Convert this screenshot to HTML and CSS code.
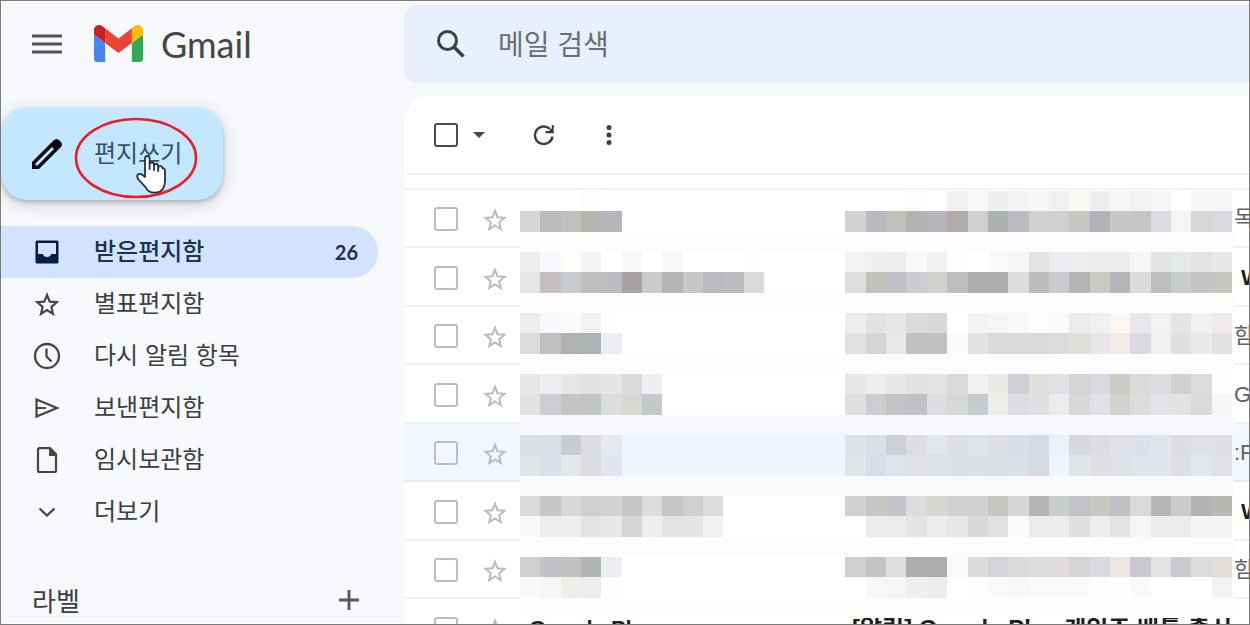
FILE: index.html
```html
<!DOCTYPE html>
<html lang="ko">
<head>
<meta charset="utf-8">
<title>Gmail</title>
<link rel="stylesheet" href="styles.css">
</head>
<body>
<div class="window">
  <aside class="sidebar">
    <header class="brand">
      <button class="icon-btn" aria-label="메뉴">
        <svg width="30" height="20" viewBox="0 0 30 20"><path d="M0 2h30M0 10h30M0 18h30" stroke="#50545a" stroke-width="2.800" fill="none"/></svg>
      </button>
      <svg class="logo" width="49" height="37" viewBox="52 42 88 66" preserveAspectRatio="none">
        <path fill="#4285f4" d="M58 108h14V74L52 59v43c0 3.320 2.690 6 6 6"/>
        <path fill="#34a853" d="M120 108h14c3.320 0 6-2.690 6-6V59l-20 15"/>
        <path fill="#fbbc04" d="M120 48v26l20-15v-8c0-7.420-8.470-11.650-14.400-7.200"/>
        <path fill="#ea4335" d="M72 74V48l24 18 24-18v26L96 92"/>
        <path fill="#c5221f" d="M52 51v8l20 15V48l-5.600-4.200c-5.940-4.450-14.400-.22-14.400 7.200"/>
      </svg>
      <span class="wordmark">Gmail</span>
    </header>

    <div class="compose-wrap">
      <button class="compose">
        <svg width="32" height="32" viewBox="0 0 32 32"><path fill="#0b0b0d" fill-rule="evenodd" d="M1 31v-7L22.500 2.500q3-3 6 0l1 1q3 3 0 6L8 31zM4.500 27.500h2L23 11l-2-2L4.500 25.500z"/></svg>
        <span class="label">편지쓰기</span>
      </button>
      <svg class="ring" width="124" height="84" viewBox="0 0 124 84"><ellipse cx="62" cy="42" rx="60" ry="39" fill="none" stroke="#ec1c24" stroke-width="2.600"/></svg>
      <svg class="hand" width="32" height="40" viewBox="0 0 32 40"><path d="M10 23V4.500Q10 2 12.300 2T14.600 4.500V15v-4.500q0-2 2.200-2t2.200 2V16v-4q0-2 2.100-2t2.100 2v5-3q0-1.800 2-1.800t2.200 2q2.600 0 2.600 3v10q0 4-2 7.500-2.500 4-8.500 4-6.500 0-9-5.500L3 25q-1.500-3 0-4.500 2-1.500 4.500.5z" fill="#fff" stroke="#25303f" stroke-width="1.800" stroke-linejoin="round"/></svg>
    </div>

    <nav class="folders">
      <a class="folder active" href="#">
        <svg width="30" height="30" viewBox="0 0 30 30"><path fill="#041e49" fill-rule="evenodd" d="M5 3.500h20q1.500 0 1.500 1.500v20q0 1.500-1.500 1.500H5q-1.500 0-1.500-1.500V5q0-1.500 1.500-1.500zM6 6v11h5q.5 3 4 3t4-3h5V6z"/></svg>
        <span class="label">받은편지함</span><b class="count">26</b>
      </a>
      <a class="folder" href="#">
        <svg width="30" height="30" viewBox="0 0 30 30"><path d="M15 6l2.700 6.600 7.100.6-5.400 4.700 1.600 7-6-3.800-6 3.800 1.600-7-5.400-4.700 7.100-.6z" fill="none" stroke="#444746" stroke-width="2.200"/></svg>
        <span class="label">별표편지함</span>
      </a>
      <a class="folder" href="#">
        <svg width="30" height="30" viewBox="0 0 30 30"><g fill="none" stroke="#444746" stroke-width="2.300"><circle cx="15" cy="15" r="12"/><path d="M14.500 7.500v8l5 5"/></g></svg>
        <span class="label">다시 알림 항목</span>
      </a>
      <a class="folder" href="#">
        <svg width="30" height="30" viewBox="0 0 30 30"><path d="M4.500 6.500L25 15 4.500 23.500zM4.500 15H14" fill="none" stroke="#444746" stroke-width="2.200"/></svg>
        <span class="label">보낸편지함</span>
      </a>
      <a class="folder" href="#">
        <svg width="30" height="30" viewBox="0 0 30 30"><path d="M7.500 3.200h10.500l6 6v16.300q0 1.500-1.500 1.500h-15Q6 27 6 25.500V4.700q0-1.500 1.500-1.500z" fill="none" stroke="#444746" stroke-width="2.200"/><path d="M17 3l8 8h-8z" fill="#444746"/></svg>
        <span class="label">임시보관함</span>
      </a>
      <a class="folder" href="#">
        <svg width="30" height="30" viewBox="0 0 30 30"><path d="M7.500 11.500l7.500 7 7.500-7" fill="none" stroke="#444746" stroke-width="2.300"/></svg>
        <span class="label">더보기</span>
      </a>
    </nav>

    <div class="labels">
      <h2>라벨</h2>
      <button class="icon-btn" aria-label="새 라벨 만들기">
        <svg width="20" height="20" viewBox="0 0 20 20"><path d="M0 10h20M10 0v20" stroke="#55585a" stroke-width="2.800"/></svg>
      </button>
    </div>
  </aside>

  <main class="main">
    <form class="search">
      <button class="icon-btn" type="button" aria-label="검색">
        <svg width="30" height="30" viewBox="0 0 30 30"><g fill="none" stroke="#3c4043"><circle cx="11.500" cy="11.500" r="9" stroke-width="3"/><path d="M18 18l9.500 9.500" stroke-width="3.600"/></g></svg>
      </button>
      <input type="search" aria-label="메일 검색" placeholder="메일 검색">
    </form>

    <section class="panel">
      <div class="toolbar">
        <input type="checkbox" class="check dark" aria-label="모두 선택">
        <button class="icon-btn caret" aria-label="선택 옵션"><svg width="12" height="6" viewBox="0 0 12 6"><path d="M0 0h12L6 6z" fill="#444746"/></svg></button>
        <button class="icon-btn refresh" aria-label="새로고침"><svg width="22" height="22" viewBox="0 0 22 22"><path d="M19.500 12.500A8.800 8.800 0 1 1 17 5" fill="none" stroke="#3c3f41" stroke-width="2.400"/><path d="M20.800 1v8.200h-8.300V7h3.500l2.700-2.700V1z" fill="#3c3f41"/></svg></button>
        <button class="icon-btn more" aria-label="더보기"><svg width="8" height="20" viewBox="0 0 8 20"><g fill="#3c3f41"><circle cx="4" cy="2.600" r="2.500"/><circle cx="4" cy="10" r="2.500"/><circle cx="4" cy="17.400" r="2.500"/></g></svg></button>
      </div>

      <div class="mail-area">
        <ul class="mails" id="mails">
          <li class="mail"><input type="checkbox" class="check" aria-label="메일 1"><span class="star"></span><span class="from"></span><span class="subject"></span><span class="rest">목</span></li>
          <li class="mail"><input type="checkbox" class="check" aria-label="메일 2"><span class="star"></span><span class="from"></span><span class="subject"></span><span class="rest unread">W</span></li>
          <li class="mail"><input type="checkbox" class="check" aria-label="메일 3"><span class="star"></span><span class="from"></span><span class="subject"></span><span class="rest">함</span></li>
          <li class="mail"><input type="checkbox" class="check" aria-label="메일 4"><span class="star"></span><span class="from"></span><span class="subject"></span><span class="rest">Go</span></li>
          <li class="mail read"><input type="checkbox" class="check" aria-label="메일 5"><span class="star"></span><span class="from"></span><span class="subject"></span><span class="rest">:P</span></li>
          <li class="mail"><input type="checkbox" class="check" aria-label="메일 6"><span class="star"></span><span class="from"></span><span class="subject"></span><span class="rest unread">W</span></li>
          <li class="mail"><input type="checkbox" class="check" aria-label="메일 7"><span class="star"></span><span class="from"></span><span class="subject"></span><span class="rest">함</span></li>
          <li class="mail bold"><input type="checkbox" class="check" aria-label="메일 8"><span class="star"></span><span class="from">Google Play</span><span class="subject">[알림] Google Play 게임즈 배틀 출시</span><span class="rest"></span></li>
        </ul>
        <svg class="mosaic" id="mosaic" viewBox="0 0 351 210" preserveAspectRatio="none" shape-rendering="crispEdges" aria-hidden="true"></svg>
      </div>
    </section>
  </main>
</div>
<script src="mosaic.js"></script>
</body>
</html>
```

FILE: styles.css
```css
* {
  box-sizing: border-box;
}

body {
  margin: 0;
  font-family: "Noto Sans CJK KR", sans-serif;
  color: #3c3f41;
}

button {
  border: 0;
  padding: 0;
  background: none;
  font: inherit;
  color: inherit;
}

svg {
  display: block;
  flex: none;
}

.window {
  display: flex;
  height: 100vh;
  overflow: hidden;
  border: 1px solid #7a7a7a;
  background: #f6f8fc;
  box-shadow: inset 0 0 0 1px #fff;
}

.sidebar {
  flex: none;
  width: 403px;
}

.brand {
  display: flex;
  align-items: center;
  height: 85px;
  padding-left: 31px;
}

.logo {
  margin: 0 18px 0 32px;
}

.wordmark {
  font: 36px/40px Lato, sans-serif;
  color: #444746;
}

.compose-wrap {
  position: relative;
  margin-top: 22px;
}

.compose {
  display: flex;
  align-items: center;
  gap: 31px;
  width: 222px;
  height: 92px;
  padding-left: 30px;
  border-radius: 26px;
  background: #c2e7ff;
  box-shadow: 0 2px 4px rgba(60, 64, 67, .3), 0 4px 14px 3px rgba(60, 64, 67, .15);
  font-size: 24px;
  line-height: 32px;
  color: #33526b;
}

.label {
  padding-bottom: 4px;
}

.ring {
  position: absolute;
  left: 73px;
  top: 8px;
}

.hand {
  position: absolute;
  left: 134px;
  top: 46px;
}

.folders {
  margin-top: 26px;
}

.folder {
  display: flex;
  align-items: center;
  gap: 32px;
  width: 377px;
  height: 52px;
  padding: 0 20px 0 31px;
  border-radius: 0 26px 26px 0;
  font-size: 24px;
  line-height: 32px;
  color: inherit;
  text-decoration: none;
}

.active {
  background: #d3e3fd;
  font-weight: 500;
  color: #1b3352;
}

.count {
  margin-left: auto;
  font: 700 20px/24px Lato, sans-serif;
}

.labels {
  display: flex;
  align-items: center;
  justify-content: space-between;
  width: 358px;
  margin-top: 42px;
  padding-left: 31px;
}

.labels h2 {
  margin: 0;
  font-size: 26px;
  line-height: 40px;
  font-weight: 400;
}

.main {
  display: flex;
  flex: 1;
  flex-direction: column;
  min-width: 0;
}

.search {
  display: flex;
  flex: none;
  align-items: center;
  height: 78px;
  margin-top: 4px;
  padding-left: 32px;
  gap: 32px;
  border-radius: 14px 0 0 14px;
  background: #e9f0fb;
}

.search input {
  flex: 1;
  min-width: 0;
  border: 0;
  padding: 0 0 2px;
  outline: 0;
  background: none;
  font: 28px/40px "Noto Sans CJK KR", sans-serif;
}

.search input::placeholder {
  color: #6a6e73;
  opacity: 1;
}

.panel {
  flex: 1;
  min-height: 0;
  margin-top: 13px;
  border-radius: 26px 0 0 0;
  background: #fff;
}

.toolbar {
  display: flex;
  align-items: center;
  height: 78px;
  margin-left: 4px;
  padding-left: 26px;
  border-bottom: 1px solid #f3f3f3;
  box-shadow: 0 1px 1px #ececec;
}

.check {
  flex: none;
  width: 24px;
  height: 24px;
  margin: 0;
  appearance: none;
  border: 2px solid #bdbdbd;
  border-radius: 3px;
}

.check.dark {
  border-color: #4a4d4f;
}

.caret {
  margin-left: 15px;
}

.refresh {
  margin-left: 48px;
}

.more {
  margin-left: 50px;
}

.mail-area {
  position: relative;
  margin-top: 14px;
  border-top: 2px solid #f0f3f5;
}

.mails {
  margin: 0;
  padding: 0;
  list-style: none;
}

.mail {
  display: flex;
  align-items: center;
  height: 58px;
  padding: 2px 0 0 30px;
  border-bottom: 2px solid #eff2f3;
  font: 22px/32px "Liberation Sans", "Noto Sans CJK KR", sans-serif;
  white-space: nowrap;
}

.mail:nth-child(even) {
  height: 59px;
}

.read {
  background: #f2f6fe;
  border-color: #e5eaf4;
}

.bold,
.unread {
  font-weight: 700;
  color: #1f1f1f;
}

.star {
  flex: none;
  width: 24px;
  margin: 2px 12px 0 25px;
}

.from {
  flex: none;
  width: 325px;
  padding-left: 10px;
}

.subject {
  flex: none;
  width: 390px;
  padding-left: 8px;
  overflow: hidden;
  font-size: 24px;
}

.rest {
  flex: 1;
  min-width: 0;
  overflow: hidden;
  color: #5f6368;
}

.rest.unread {
  padding-left: 7px;
  color: #1f1f1f;
}

.mosaic {
  position: absolute;
  left: 116px;
  top: 1px;
  width: 714px;
  height: 427px;
}
```

FILE: mosaic.js
```js
const NS = "http://www.w3.org/2000/svg";

// Each line: backdrop | sender cells from column 0 | subject cells from column 16
const rows = [
  "fff|fff fff fff fcfcfc|fff fff fff fcfcfc fff f1f1f1 f8f8f8 efefee f3f3f3 f6f6f6 f1f1f1 f8f8f5 efeff1 f6f6f6 f3f2f0 f5f5f5 fff f6f6f6 f6f6f6",
  "fff|d6d6d6 babbbd c0c0be b4b5af b4b6bb|d2d2d0 b9b9bf c0c0bd b3b3af b4b6bc b1aba8 cdd0ce adb1ad babbc0 d1cfd1 cfcfcd c6c7c0 b3b2b8 c7c7ca c5c5c5 dadcdf f6f5f3 d7d7d7 dad8dc",
  "fcfcfc||",
  "fff|eeedea f6f8fb fdfdfa f3f3f3 fff f8f8f8 fff f8f8f8 fff fff fff fdfdfd|f2f2f2 efefed ebedef f8f8f8 f1f1f1 fcfffe fff fafafa f5f5f5 e3e3e3 eaecf0 ededed ebebeb e9ebed f5f5f5 e5e5e5 e5e9e7 e3e3e3 e8e7e5",
  "fff|e6e6e4 c4bec0 c8cbcd bfbfbf bbbec0 a7a2a6 cacaca b2b4b6 c5c8c5 b9bbbe bfbbc0 d9d9dc|dfdedc c0c1bd c0c1c5 cbccd0 d2d0cc bcbfc2 acacac abadac dcdddf bdbeba c9cace b4b4b4 cac9c4 b4b6b8 dbdbdd bdbec0 c8cccd c4c4c4 c6c5c0",
  "fcfcfc||",
  "fff|eeedea f6f8fb fbfbfb f2f2f2 fefefe|ededed e3e2e0 e7e7e7 dadada d8d8d8 fff f3f3f3 f5f5f5 f8f8f8 fdfdfd fafafa ebebeb f0f0f0 fcf6f2 e6e8eb f2f2f2 e5e5e5 f1f1f1 f0ebea",
  "fff|dddcda c0c0c0 b1b1b1 aeb3b3 ebedf2|e1e1df d5d5d5 e7e8ea c1c1c3 c1c1c3 fafafa e3e2e0 d9d9dc dbd9dc dad8da dcdbdf e0dfdc e7e7e7 f1ece8 d8dae0 eef0f2 e0e0e0 eaeaea e4e2e1",
  "fcfcfc||",
  "fff|e8e7e5 ecedef e7e7e7 e1e3e2 e5e5e5 dbdbdb edeff2|e8e7e5 eceef0 e6e8e8 e0e3e1 e3e3e3 dadada eef0f2 ebeae7 cfd0d5 dfdfdc e0e1e4 d6d3d6 d8d9de cbcac7 d9dbd9 dbdde0 d0d0d0 dadcde fdfdfb",
  "fff|e3e2df cccdd0 c4c4c4 c0c4c5 dbdcde d9d8d5 c4c8cb|e0dfdd cccdd0 c3c3c3 c0c1c6 dcdde0 d7d7d3 c5cacd ededea dcdce2 dee1df ebebeb dad7da dfe1e5 d4d2cf dbdddb e2e3e6 e2e2e2 d8dbdd f6f6f6",
  "f6f8fc||",
  "f1f4fd|dde1e6 dbdfe8 c8cdd1 dddce1 e4e9f2|dfe3e8 dbdee9 cdd1d6 dcdce2 e1e7ef dfe0e4 dee4ec dfe0e5 d9dde7 d4dae4 ecf0f9 d7d8dd dbdce2 e0e1e6 dde0ea e2e6eb dcdde2 e0e1e6 dfe0e5",
  "f1f4fd|e1e5ea dae0ea e3e7ed dbdbe0 e0e5ef|e2e6eb d9dce7 dde4eb e0e1e6 dde2e6 dbe1e4 dae1e3 dce1e6 dae1e5 d3dbe5 f1f4fc e1e4e9 dedfe4 dee2e7 e0e4ee e0e4ee dddee4 e2e6ed e0e1e7",
  "f9fafc||",
  "fff|dadad8 c9c6ca d6d8d6 cfcfcf d1d2d3 c8c5c8 dcdcdc c6c6c8 d1ced1 dbdddc|d1d1cf c7c6c4 c2c4c8 dcdcdf d7d6d2 d0d1d3 ced0d2 c5c6c2 d6d6d6 b3b6b4 c9cdce c2c3c6 c8c7c2 bfc1c3 d9d9d9 b9b6ba c8cccb b3b3b3 b9b8b4",
  "fff|f9f9f7 efedee eeeeee e1e4e2 e5e7e8 d5d5d5 eeeeee e5e5e5 e5e5e5 f1f1f1|fff ececea ebebeb e2e3e5 ececec e6e6e6 d9d8d5 dfe1e3 f8fafc ecebe8 ebecef e0e0e0 eeeeec e1e4e2 f5f6f5 ebebed ebebeb f4f4f4 f5f4f2",
  "fcfcfc||",
  "fff|d0cfcc c1c2c6 c0c0c2 b0b4b5 ecedf0|cfcfcd c3c3c3 dcdedf adadaf adadaf fafafa dcdbd9 d4d4d8 d9d8db dedbdd dfdbdc d4d3d5 d9d9de ece7e2 c7c9ce e1e3e5 c9cace dcdcdc e1deda",
  "fff|f9f9f9 f6f6f6 efeeeb ebedef fdfdfd|fff f6f7f7 f5f5f5 edf0ef ececec fff fcfcfc fafafa f8f8f7 fafafa fafafa fafafa fcfcfc fffefb fafafa fff fff fff f1f2f1",
  "fdfdfd||"
];

const mosaic = document.getElementById("mosaic");

function cell(x, y, width, color) {
  const rect = document.createElementNS(NS, "rect");
  rect.setAttribute("x", x);
  rect.setAttribute("y", y);
  rect.setAttribute("width", width);
  rect.setAttribute("height", 10);
  rect.setAttribute("fill", "#" + color);
  mosaic.append(rect);
}

rows.forEach((row, r) => {
  const [back, from, subject] = row.split("|");
  cell(0, r * 10, 351, back);
  [[from, 0], [subject, 16]].forEach(([cells, start]) => {
    cells.split(" ").filter(Boolean).forEach((color, c) => {
      cell((start + c) * 10, r * 10, 10, color);
    });
  });
});

document.querySelectorAll(".star").forEach((star) => {
  star.innerHTML = '<svg width="24" height="24" viewBox="0 0 24 24"><path d="M12 2.800l2.500 6.400 7 .6-5.300 4.500 1.600 6.900-5.800-3.700-5.800 3.700 1.600-6.900L2.500 9.800l7-.6z" fill="none" stroke="#bcbcbc" stroke-width="2"/></svg>';
});
```
